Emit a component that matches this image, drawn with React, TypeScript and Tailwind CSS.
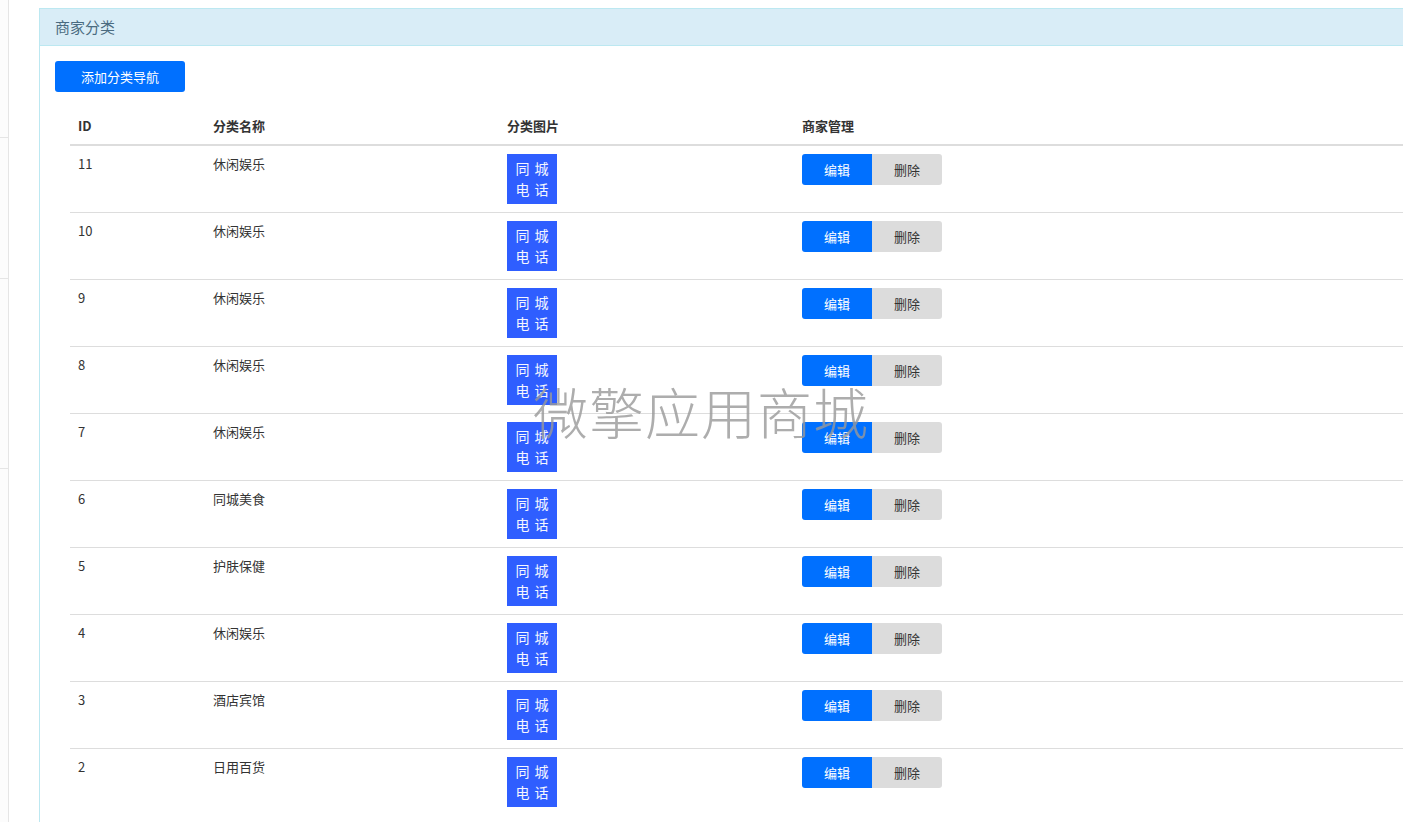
const rows = [
  { id: 11, name: '休闲娱乐' },
  { id: 10, name: '休闲娱乐' },
  { id: 9, name: '休闲娱乐' },
  { id: 8, name: '休闲娱乐' },
  { id: 7, name: '休闲娱乐' },
  { id: 6, name: '同城美食' },
  { id: 5, name: '护肤保健' },
  { id: 4, name: '休闲娱乐' },
  { id: 3, name: '酒店宾馆' },
  { id: 2, name: '日用百货' },
]

function CategoryPic() {
  return (
    <div className="w-[50px] h-[50px] bg-[#2f5eff] text-[#f4f6ff] text-[14px] leading-[21px] flex flex-col items-center justify-center">
      <div className="flex gap-[5px]"><span>同</span><span>城</span></div>
      <div className="flex gap-[5px]"><span>电</span><span>话</span></div>
    </div>
  )
}

export default function App() {
  return (
    <div
      className="relative w-[1403px] h-[822px] overflow-hidden bg-white flex text-[#333]"
      style={{ fontFamily: '"Noto Sans CJK SC", "Noto Sans", sans-serif' }}
    >
      {/* left menu edge */}
      <div className="w-[9px] shrink-0 border-r border-[#e5e5e5] bg-[#fcfcfc] flex flex-col">
        <div className="h-[138px] border-b border-[#e5e5e5]" />
        <div className="h-[141px] border-b border-[#e5e5e5]" />
        <div className="h-[190px] border-b border-[#e5e5e5]" />
      </div>

      <div className="pl-[30px] pt-2 shrink-0">
        <div className="w-[1400px] border border-[#bce8f1] bg-white h-[830px]">
          <div className="h-[37px] bg-[#d9edf7] border-b border-[#bce8f1] flex items-center px-[15px] text-[15px] text-[#4a6b80]">
            商家分类
          </div>

          <div className="px-[15px] pt-[15px]">
            <button className="w-[130px] h-[31px] bg-[#0070ff] text-white text-[13px] rounded-[3px]">
              添加分类导航
            </button>

            <table className="ml-[15px] mt-[16px] w-[1340px] border-collapse text-[13px] leading-5 table-fixed">
              <thead>
                <tr className="text-left">
                  <th className="w-[135px] px-2 py-2 font-bold border-b-2 border-[#ddd]">ID</th>
                  <th className="w-[294px] px-2 py-2 font-bold border-b-2 border-[#ddd]">分类名称</th>
                  <th className="w-[295px] px-2 py-2 font-bold border-b-2 border-[#ddd]">分类图片</th>
                  <th className="px-2 py-2 font-bold border-b-2 border-[#ddd]">商家管理</th>
                </tr>
              </thead>
              <tbody>
                {rows.map((r, i) => (
                  <tr
                    key={r.id}
                    className={i < rows.length - 1 ? 'border-b border-[#ddd] align-top' : 'align-top'}
                  >
                    <td className="px-2 py-2">{r.id}</td>
                    <td className="px-2 py-2">{r.name}</td>
                    <td className="px-2 py-2">
                      <CategoryPic />
                    </td>
                    <td className="px-2 py-2">
                      <div className="flex">
                        <button className="w-[70px] h-[31px] bg-[#0070ff] text-white rounded-l-[3px]">
                          编辑
                        </button>
                        <button className="w-[70px] h-[31px] bg-[#dcdcdc] text-[#333] rounded-r-[3px]">
                          删除
                        </button>
                      </div>
                    </td>
                  </tr>
                ))}
              </tbody>
            </table>
          </div>
        </div>
      </div>

      {/* watermark */}
      <div className="absolute left-[533px] top-[377px] text-[55px] leading-[66px] tracking-[1px] text-[#999] opacity-80 font-light pointer-events-none">
        微擎应用商城
      </div>
    </div>
  )
}
